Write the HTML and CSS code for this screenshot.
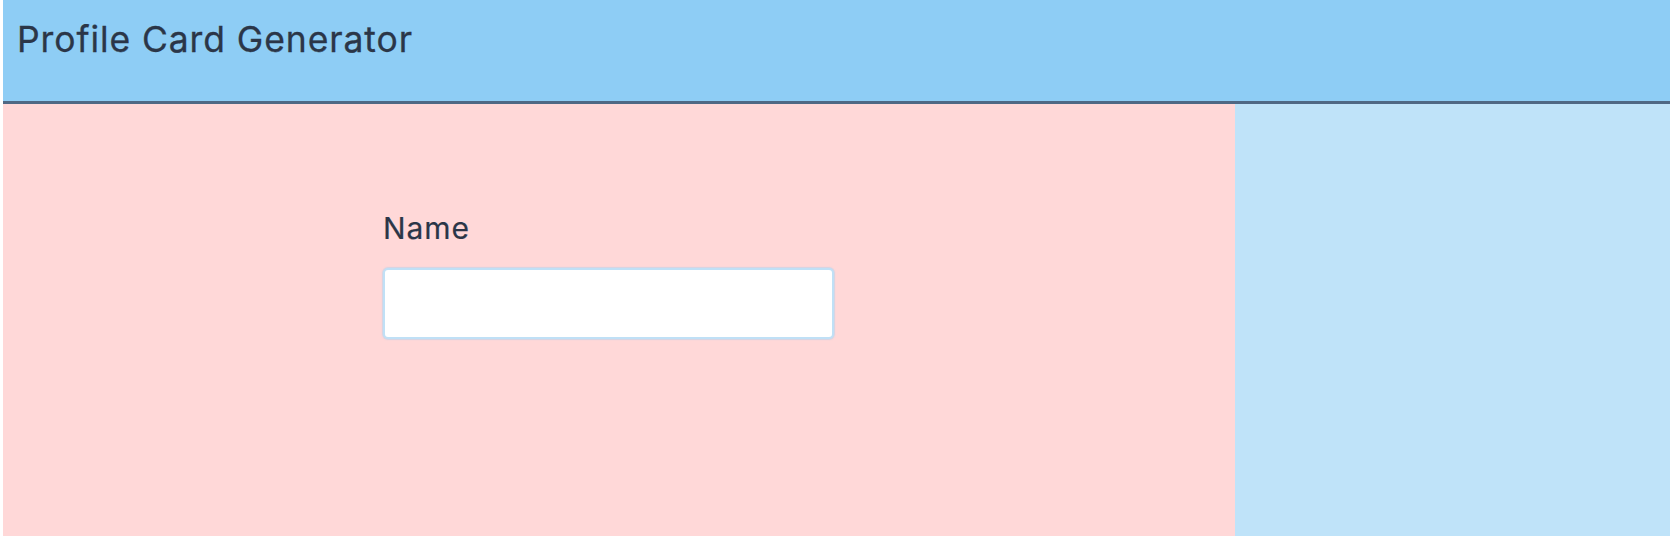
FILE: index.html
```html
<!DOCTYPE html>
<html lang="en">
<head>
<meta charset="utf-8">
<title>Profile Card Generator</title>
<link rel="stylesheet" href="styles.css">
</head>
<body>
<div class="app">
  <header class="topbar">
    <h1 class="title">Profile Card Generator</h1>
  </header>
  <main class="content">
    <section class="editor">
      <form class="form">
        <label class="label" for="name">Name</label>
        <input class="input" id="name" type="text">
      </form>
    </section>
    <aside class="preview"></aside>
  </main>
</div>
</body>
</html>
```
FILE: styles.css
```css
html, body {
  margin: 0;
  padding: 0;
  height: 100%;
  background: #ffffff;
}
body {
  padding-left: 3px;
  box-sizing: border-box;
  font-family: Inter, "Liberation Sans", sans-serif;
  color: #2d3748;
}
.app {
  display: flex;
  flex-direction: column;
  height: 100%;
}
.topbar {
  height: 104px;
  box-sizing: border-box;
  background: #8ecdf5;
  border-bottom: 3px solid #4f6884;
  padding: 18px 14px 0;
}
.title {
  margin: 0;
  font-size: 35.5px;
  font-weight: 400;
  letter-spacing: 0.9px;
  line-height: 44px;
  color: #2b3648;
  -webkit-text-stroke: 0.3px #2b3648;
}
.content {
  flex: 1;
  display: flex;
}
.editor {
  width: 1232px;
  flex: none;
  background: #ffd8d8;
  padding: 106px 0 0 380px;
  box-sizing: border-box;
}
.preview {
  flex: 1;
  background: #bfe3f9;
}
.form {
  display: flex;
  flex-direction: column;
  gap: 22px;
  width: 451px;
}
.label {
  font-size: 30px;
  line-height: 36px;
  letter-spacing: 0.9px;
  color: #2b3648;
  -webkit-text-stroke: 0.2px #2b3648;
}
.input {
  height: 71px;
  width: 451px;
  box-sizing: border-box;
  border: 2px solid #c0e0f6;
  border-radius: 5px;
  background: #ffffff;
  outline: none;
  box-shadow: 0 0 1px 1px rgba(170, 210, 240, 0.5);
  font-size: 24px;
  padding: 0 12px;
}
```
